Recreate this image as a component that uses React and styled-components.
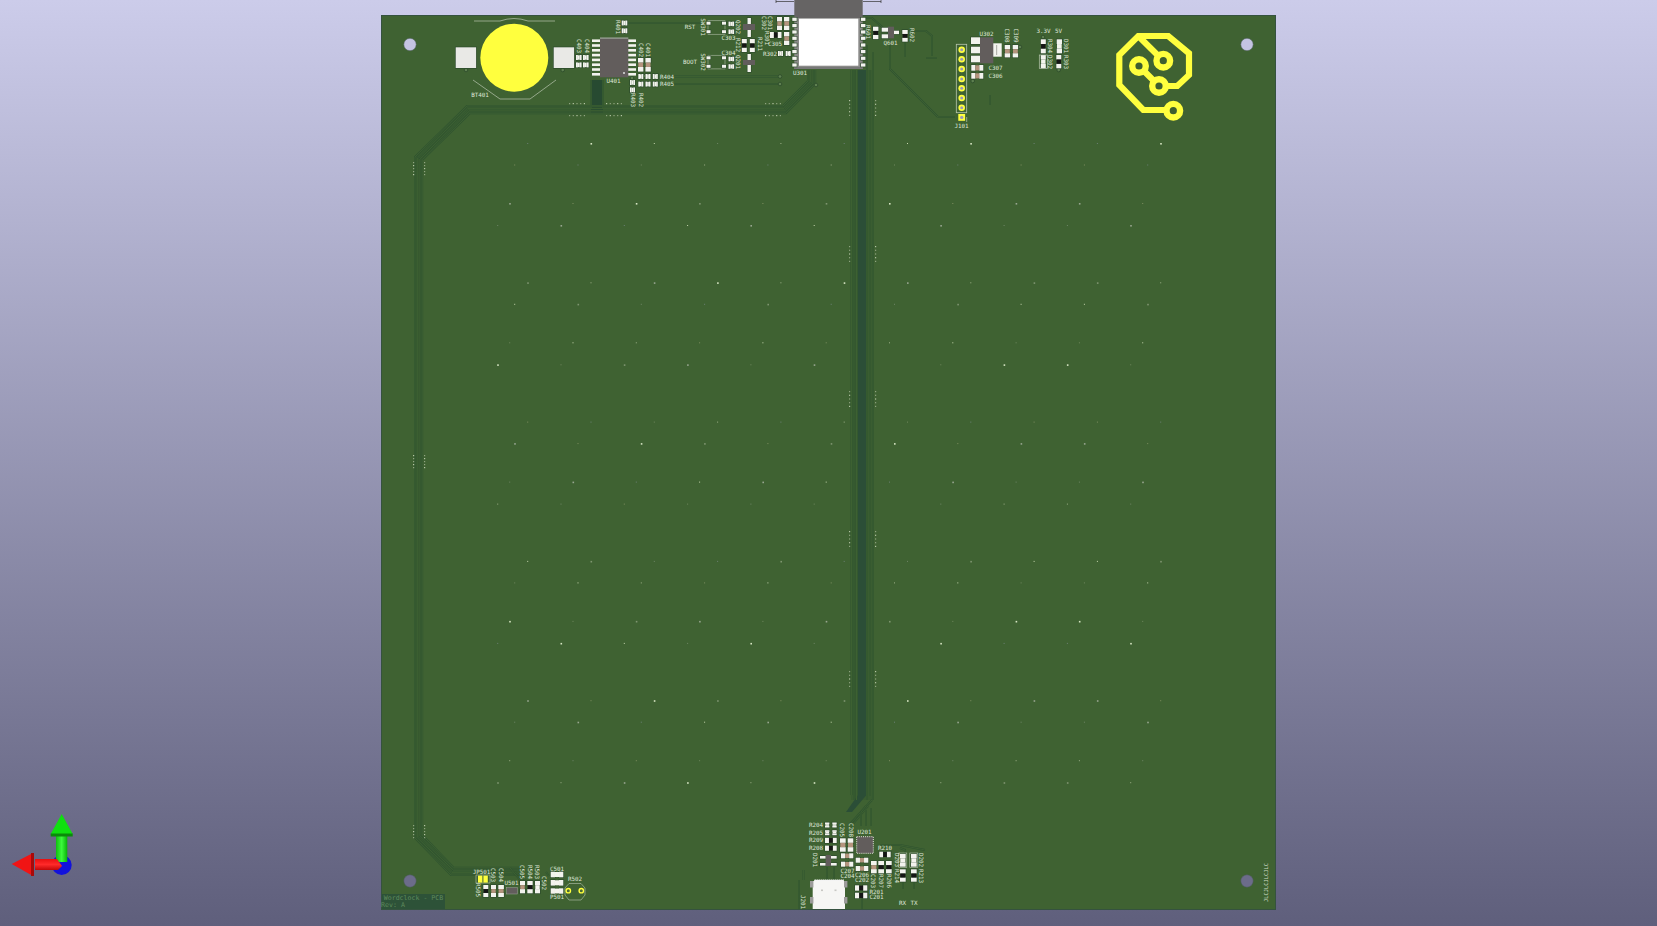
import React from 'react';
import styled, { createGlobalStyle } from 'styled-components';

const Global = createGlobalStyle`
  html, body { margin: 0; height: 100%; overflow: hidden; }
  body { font-family: "DejaVu Sans Mono", monospace; }
`;

const Viewer = styled.div`
  position: relative;
  box-sizing: border-box;
  height: 100vh;
  padding-top: 16px;
  display: flex;
  justify-content: center;
  background: linear-gradient(#ccccea, #5f5f7c);
`;

const Board = styled.div`
  width: 893px;
  height: 893px;
  background: #3f6232;
  box-shadow: 0 0 0 1px #35523f;
`;

const Drawing = styled.svg`
  display: block;
  width: 893px;
  height: 893px;
  overflow: visible;
`;

const Gizmo = styled.svg`
  position: absolute;
  left: 0;
  bottom: 26px;
  width: 100px;
  height: 100px;
`;

const SilkText = styled.text`
  font-family: "DejaVu Sans Mono", "Liberation Mono", monospace;
  font-size: ${p => p.$size || 5.9}px;
  fill: ${p => p.$color || '#dfe6d8'};
  text-anchor: middle;
  dominant-baseline: central;
`;

const Silk = ({ x, y, rot, size, color, children }) => (
  <SilkText x={x} y={y} $size={size} $color={color} transform={rot ? `rotate(${rot} ${x} ${y})` : undefined}>{children}</SilkText>
);

const Pad = styled.rect`
  fill: ${p => p.$fill || '#f3f3ee'};
  stroke: #2c4a2b;
  stroke-width: 1.3;
  paint-order: stroke;
`;

const Chip = styled.rect`
  fill: #625d5c;
`;

const Outline = styled.path`
  fill: none;
  stroke: ${p => p.$color || '#b9c6b0'};
  stroke-width: ${p => p.$w || 0.7};
`;

const BODY = { tan: '#b5947e', black: '#151515', white: '#f4f4ee' };

// two-terminal smd part, box given in page pixels
const Part = ({ x, y, w, h, body = 'white' }) => {
  const vertical = h > w;
  if (vertical) {
    const p = h * 0.34;
    return (
      <g>
        <Pad x={x} y={y} width={w} height={p} />
        <Pad x={x} y={y + h - p} width={w} height={p} />
        <rect x={x + 0.3} y={y + p} width={w - 0.6} height={h - 2 * p} fill={BODY[body]} />
      </g>
    );
  }
  const p = w * 0.34;
  return (
    <g>
      <Pad x={x} y={y} width={p} height={h} />
      <Pad x={x + w - p} y={y} width={p} height={h} />
      <rect x={x + p} y={y + 0.3} width={w - 2 * p} height={h - 0.6} fill={BODY[body]} />
    </g>
  );
};

const parts = [
  [576, 55, 5.6, 5], [583, 55, 5.6, 5], [576, 62.4, 5.6, 5], [583, 62.4, 5.6, 5],
  [621.7, 20.5, 5.6, 5], [621.7, 28.3, 5.6, 5],
  [638, 58, 5.4, 13.6, 'tan'], [645.4, 58, 5.4, 13.6, 'tan'],
  [638.3, 74, 5, 5], [645.5, 74, 5, 5], [652.8, 74, 5, 5],
  [638.3, 81.6, 5, 5], [645.5, 81.6, 5, 5], [652.8, 81.6, 5, 5],
  [630, 80, 5, 5], [630, 87.4, 5, 5],
  [728.5, 21.6, 5.6, 4.6], [728.5, 29.4, 5.6, 4.6], [728.5, 56.7, 5.6, 4.6], [728.5, 64.2, 5.6, 4.6],
  [741.8, 39, 5, 13, 'black'], [749.8, 39, 5, 13, 'black'],
  [777, 17, 5, 13, 'tan'], [784, 17, 5.3, 13, 'tan'],
  [770, 32, 11.5, 6, 'black'], [784, 32, 5.3, 13, 'tan'],
  [778, 51, 5, 5], [785.7, 51, 5, 5],
  [873, 26.7, 5.4, 12.4, 'black'], [902.3, 30, 5.4, 11.7, 'black'],
  [1004.7, 45, 5.4, 12.4, 'tan'], [1012.7, 45, 5.4, 12.4, 'tan'],
  [971.3, 65, 12, 5.7, 'tan'], [971.3, 73, 12, 5.7, 'tan'],
  [1040.8, 39.3, 5, 14, 'black'], [1040.8, 55, 5, 13.3], [1056.7, 39.3, 5.3, 14], [1056.3, 55, 5, 13.3, 'black'],
  [825, 822.5, 4.4, 5], [832.3, 822.5, 4.4, 5], [825, 830.2, 4.4, 5], [832.3, 830.2, 4.4, 5],
  [825, 837.8, 11.7, 5.2, 'black'], [825, 845.6, 11.7, 5.2, 'black'],
  [840, 838.3, 5.7, 13.4, 'tan'], [847.7, 838.3, 5.6, 13.4, 'tan'],
  [841, 853.3, 12.3, 5, 'tan'], [841, 861.7, 12.3, 5, 'tan'],
  [855.7, 857.7, 12.6, 5, 'tan'], [855.7, 866, 12.6, 5, 'tan'],
  [871, 861, 5.7, 12.3, 'tan'], [878.3, 861, 5.7, 12.3, 'black'], [886, 861, 5.7, 12.3, 'black'],
  [879.3, 851.7, 11.4, 5.6, 'black'],
  [855, 885.3, 12.3, 5.4, 'black'], [855, 892.7, 12.3, 5.6, 'black'],
  [900, 854, 5.7, 12.7], [911, 854, 5.7, 12.7], [900, 869.3, 5.7, 12.4, 'black'], [911, 869.3, 5.7, 12.4, 'black'],
  [483.3, 885, 5, 12, 'black'], [491, 885, 5, 12, 'tan'], [498.3, 885, 5.6, 12, 'tan'],
  [520, 881, 5, 12.3, 'tan'], [527.3, 881, 5.4, 12.3, 'black'], [535, 881, 5, 12.3],
  [550.7, 871.7, 12.6, 5.6], [550.7, 880, 12.6, 5.6], [550.7, 888.3, 12.6, 5.4],
];

// label, x, y, rotation
const labels = [
  ['BT401', 480, 95], ['C403', 578.7, 46, 90], ['C404', 586.7, 46, 90], ['R401', 618, 27, 90],
  ['U401', 613.5, 81], ['C402', 640.7, 50, 90], ['C401', 648, 50, 90], ['R404', 667, 76.5], ['R405', 667, 84],
  ['R403', 632.5, 100, 90], ['R402', 640.7, 100, 90], ['RST', 690, 27], ['BOOT', 690, 62],
  ['SW301', 702.7, 27, 90], ['SW302', 702.7, 62, 90], ['C303', 728.5, 37.5], ['C304', 728.5, 53],
  ['Q202', 738, 27, 90], ['R212', 738, 45, 90], ['Q201', 738, 62, 90], ['R211', 760, 44, 90],
  ['C302', 764, 23, 90], ['C301', 770, 23, 90], ['R301', 767, 38, 90], ['C305', 775, 43.5], ['R302', 770, 54],
  ['U301', 800, 72.5], ['R601', 868.3, 32, 90], ['Q601', 890.5, 43], ['R602', 911.7, 35, 90],
  ['J101', 961.5, 126], ['U302', 986.5, 33.5], ['C308', 1007.3, 35.5, 90], ['C309', 1015.7, 35.5, 90],
  ['C307', 995.5, 67.7], ['C306', 995.5, 75.7], ['3.3V', 1043.5, 31], ['5V', 1058.5, 31],
  ['R304', 1050, 46, 90], ['D302', 1050, 62, 90], ['D301', 1065.7, 46, 90], ['R303', 1065.7, 62, 90],
  ['R204', 816, 825], ['R205', 816, 832.7], ['R209', 816, 840.3], ['R208', 816, 848.3],
  ['C205', 842.3, 830, 90], ['C208', 850.7, 830, 90], ['U201', 864.5, 832], ['R210', 885, 847.7],
  ['D201', 815, 860, 90], ['D203', 896.5, 860, 90], ['R214', 896.5, 876, 90], ['D202', 920.7, 860, 90], ['R213', 920.7, 876, 90],
  ['C207', 847.5, 870.7], ['C204', 847.5, 875.5], ['C206', 862, 875.3], ['C202', 862, 880],
  ['C203', 873.3, 881, 90], ['R207', 881, 881, 90], ['R206', 889, 881, 90],
  ['R201', 876.5, 891.7], ['C201', 876.5, 897.3], ['RX', 902.5, 902.7], ['TX', 914, 902.7], ['J201', 803, 902, 90],
  ['JP501', 481.5, 871.7], ['R505', 478.3, 890, 90], ['C503', 493.3, 875, 90], ['C504', 501, 875, 90],
  ['U501', 511.5, 882.7], ['C505', 522.3, 872, 90], ['R504', 530, 872, 90], ['R503', 537.3, 872, 90], ['C502', 544, 883, 90],
  ['C501', 557, 869], ['P501', 557, 897.3], ['R502', 575, 879.3],
];

const holes = [[410, 44.5, '#c4c4e2'], [1247, 44.5, '#c4c4e2'], [410, 881, '#6c6c8a'], [1247, 881, '#6c6c8a']];

const DOT_COLORS = ['#c6d6ae', '#7f9570', '#9db088', '#6f8666', '#98a690', '#7f8f60', '#6c8074', '#d8e6c4', '#70885e'];

const dots = [];
for (let n = 0; n < 5; n++) {
  [[0, 907], [21.5, 894], [60, 889], [82, 877]].forEach(([dy, base], r) => {
    for (let k = -6; k < 5; k++) {
      const x = base + k * 63.3;
      if (x > 845 && x < 880) continue;
      const seed = Math.abs(n * 31 + r * 17 + k * k * 5 + k * 11) % 9;
      dots.push({ x, y: 143 + n * 139.3 + dy, fill: DOT_COLORS[seed], size: seed % 3 === 1 ? 1.6 : 1 });
    }
  });
}

const cluster = (x, y0, step = 3.7) => [0, 1, 2, 3, 4].map(i => ({ x, y: y0 + i * step }));
const rowCluster = (x0, y) => [0, 1, 2, 3, 4].map(i => ({ x: x0 + i * 3.7, y }));
const viaMarks = [
  ...[100, 246, 391, 531, 671].flatMap(y => [...cluster(849, y), ...cluster(875, y)]),
  ...[162, 455, 825].flatMap(y => [...cluster(413, y, 3), ...cluster(424, y, 3)]),
  ...[569, 606, 765].flatMap(x => [...rowCluster(x, 103), ...rowCluster(x, 115)]),
];

const loopTrack = i => {
  const t = 0.414 * i;
  return `M520 ${875 - i} L${451 + t} ${875 - i} L${415 + i} ${838 - t} L${415 + i} ${157 + t} L${467 + t} ${106 + i} L${783 + t} ${106 + i} L${808 + i} ${81 + t} L${808 + i} 70`;
};

const Track = styled.path`
  fill: none;
  stroke: ${p => p.$color || '#2f5330'};
  stroke-width: ${p => p.$w || 1.9};
`;

const Trace = ({ d }) => (
  <g>
    <Track d={d} />
    <Track d={d} $color="#3f6332" $w={0.9} />
  </g>
);

const traces = [
  'M628 23 L705 23', 'M660 76.5 L780 76.5', 'M660 84 L780 84',
  'M603 80 L603 108', 'M591 80 L591 108',
  'M938 117 L955 117 M938 117 L890 69 L890 40', 'M852 18 L872 18 L890 34',
  'M907 31 L926 31 L932 36 L932 56', 'M905 40 L905 57',
  'M851.5 70 L851.5 795', 'M854 70 L854 800', 'M856.5 70 L856.5 800',
  'M867 45 L867 800', 'M870 70 L870 796', 'M873 52 L873 800',
  'M872 800 L850 824', 'M868 806 L853 824', 'M861 826 L861 812 L866 806', 'M866 826 L866 810', 'M871 826 L871 808',
  'M873 851 L873 846', 'M900 848 L905 850 L905 854', 'M880 845 L900 845 L925 850',
  'M799 880 L799 909', 'M803.5 870 L803.5 880', 'M862 898 L862 909',
  'M903 882 L903 889', 'M914 882 L914 889',
  'M990 95 L990 105', 'M926 58 L937 58', 'M827 867 L827 880', 'M834 867 L834 880',
  'M515 872 L528 882', 'M510 868 L520 880', 'M546 872 L549 876',
];

const u401Pins = [0, 1, 2, 3, 4, 5, 6, 7].map(i => 40.7 + i * 4.8);
const moduleVias = [[466, 70], [562.7, 70], [644, 76], [632, 78], [780, 76.5], [780, 84], [816, 85], [1020, 47], [972.7, 81], [1058.7, 70], [1043, 37]];
const headerPins = [49.7, 59.3, 69, 79, 88.3, 98, 107.7];
const u301Pads = [19.3, 25.6, 32, 38.3, 45, 51.6, 58.3, 65];
const Y = '#ffff3e';

const switches = [20.7, 55.3];
const logoRings = [[1139, 66], [1163.3, 60.7], [1159, 86], [1173.3, 110.7]];

const Drawings = () => (
  <Drawing viewBox="382 16 893 893">
    {/* copper under the mask */}
    <rect x="851" y="70" width="22" height="730" fill="#3a5d31" />
    <rect x="858" y="70" width="8.5" height="725" fill="#2b4e37" />
    <polygon points="858,795 866.5,795 852,812 846,812" fill="#2b4e37" />
    <rect x="591" y="80" width="12" height="33" fill="#274a31" />
    {[0, 2.4, 4.8, 7.2].map(i => <Trace key={i} d={loopTrack(i)} />)}
    {traces.map(d => <Trace key={d} d={d} />)}

    {dots.map((d, i) => <rect key={i} x={d.x} y={d.y} width={d.size} height={d.size} fill={d.fill} />)}
    {viaMarks.map((d, i) => <rect key={i} x={d.x} y={d.y} width="1.2" height="1.2" fill={i % 3 ? '#8fa480' : '#b6c6a6'} />)}
    {moduleVias.map(([x, y]) => <circle key={`${x}-${y}`} cx={x} cy={y} r="1.8" fill="#5e8050" stroke="#2c4a2b" strokeWidth="0.8" />)}

    {holes.map(([x, y, c]) => <circle key={`${x}${y}`} cx={x} cy={y} r="6.2" fill={c} stroke="#4a5a58" strokeWidth="0.5" />)}

    {/* coin cell */}
    <Outline d="M474 21 L500 21 Q514 16 528 21 L555 21 M473 80 L500 99 L530 99 L556 80" />
    <Pad x="455.7" y="47.3" width="20.4" height="20.7" $fill="#e9e9e6" />
    <Pad x="553.7" y="47.3" width="20.4" height="20.7" $fill="#e9e9e6" />
    <circle cx="514.3" cy="57.7" r="34" fill={Y} />

    {/* U401 */}
    {u401Pins.map(y => (
      <rect key={y} x="592" y={y - 1.3} width="44" height="2.6" fill="#f3f3ee" />
    ))}
    <Chip x="600" y="38.3" width="28.3" height="39" />
    <rect x="600" y="37.5" width="28.3" height="1.2" fill="#a3a6a0" />
    <circle cx="624" cy="73" r="1" fill="#ddd" />

    {/* switches */}
    {switches.map(y => (
      <g key={y}>
        <rect x="708" y={y} width="17" height="13.6" fill="none" stroke="#9fb096" strokeWidth="0.7" />
        <Pad x="706.5" y={y + 1} width="4" height="3" />
        <Pad x="706.5" y={y + 9.5} width="4" height="3" />
        <Pad x="722" y={y + 1} width="4" height="3" />
        <Pad x="722" y={y + 9.5} width="4" height="3" />
      </g>
    ))}

    {/* Q201 / Q202 */}
    <Pad x="747.5" y="18" width="3.4" height="6" />
    <Pad x="747.5" y="30" width="3.4" height="7" />
    <Chip x="743" y="24" width="12" height="6" />
    <Pad x="747.5" y="54" width="3.4" height="6" />
    <Pad x="747.5" y="65" width="3.4" height="7" />
    <Chip x="743" y="60" width="12" height="5" />

    {/* U301 module */}
    <rect x="794.3" y="-16" width="68.4" height="34" fill="#666464" />
    <rect x="794.3" y="18" width="68.4" height="51" fill="#8a8a88" />
    <rect x="799" y="18.7" width="59.3" height="47" fill="#ffffff" />
    <rect x="794.3" y="67" width="68.4" height="2" fill="#777" />
    {u301Pads.map(y => (
      <g key={y}>
        <Pad x="792.3" y={y - 1.6} width="4.4" height="3.2" />
        <Pad x="861" y={y - 1.6} width="4.4" height="3.2" />
      </g>
    ))}
    <Outline d="M776 1.5 L794 1.5 M776 0 L776 3 M863 1.5 L881 1.5 M881 0 L881 3" $color="#333" />

    {/* Q601 */}
    <Pad x="881.7" y="27.7" width="6.5" height="4" />
    <Pad x="881.7" y="34.3" width="6.5" height="4" />
    <Pad x="894" y="30.7" width="5" height="3.4" />
    <Chip x="888" y="26.7" width="6" height="11.6" />

    {/* J101 */}
    <rect x="956.3" y="44.3" width="10.4" height="68.4" fill="none" stroke="#b9c6b0" strokeWidth="0.8" />
    {headerPins.map(y => (
      <g key={y}>
        <circle cx="961.7" cy={y} r="3.3" fill={Y} />
        <circle cx="961.7" cy={y} r="1.5" fill="#9a9ab8" />
      </g>
    ))}
    <rect x="958.3" y="114" width="6.8" height="6.8" fill={Y} />
    <circle cx="961.7" cy="117.4" r="1.7" fill="#9a9ab8" />
    <Outline d="M966.7 117 L966.7 122" />

    {/* U302 */}
    <Pad x="971" y="37.3" width="9" height="6.7" />
    <Pad x="971" y="46.7" width="9" height="6.6" />
    <Pad x="971" y="55.7" width="9" height="6.6" />
    <rect x="993" y="43.3" width="8.7" height="13.4" fill="#f3f3ee" />
    <rect x="996" y="45" width="1.2" height="10" fill="#b4b4ae" />
    <Chip x="980" y="37.3" width="13.3" height="26" />

    {parts.map(([x, y, w, h, body]) => <Part key={`${x}-${y}`} x={x} y={y} w={w} h={h} body={body} />)}

    <rect x="1039.3" y="55" width="8" height="13.3" fill="none" stroke="#b9c6b0" strokeWidth="0.7" />
    <rect x="898.8" y="853" width="8" height="14.5" fill="none" stroke="#b9c6b0" strokeWidth="0.6" />
    <rect x="909.8" y="853" width="8" height="14.5" fill="none" stroke="#b9c6b0" strokeWidth="0.6" />

    {/* logo */}
    <Outline
      d="M1159 86 L1177.3 86 L1189 75 L1189 53.3 L1168.3 36 L1138.3 36 L1119.3 55 L1119.3 85 L1143.3 110 L1173.3 110 M1138.3 36 L1163.3 60.7 M1139 66 L1159 86"
      $color={Y}
      $w={6.2}
    />
    {logoRings.map(([x, y]) => <circle key={x} cx={x} cy={y} r="6.8" fill="#3d5e30" stroke={Y} strokeWidth="6.4" />)}

    {/* U201 */}
    <Chip x="856.7" y="836.7" width="16.6" height="16.6" stroke="#e8e8e0" strokeWidth="1" strokeDasharray="1 1.1" />
    <Pad x="820" y="856" width="5.7" height="2.6" />
    <Pad x="820" y="863" width="5.7" height="2.6" />
    <Pad x="831" y="856" width="5.7" height="2.6" />
    <Pad x="831" y="863" width="5.7" height="2.6" />
    <Chip x="825.7" y="855" width="5.3" height="11" />

    {/* USB-C bottom */}
    <rect x="814" y="879.5" width="30" height="2" fill="#f4f4f4" stroke="#3f6232" strokeWidth="0.5" strokeDasharray="1 1" />
    <rect x="812.7" y="881" width="32.3" height="28" fill="#f6f6f4" />
    <rect x="810" y="881" width="3.4" height="6.5" fill="#9c9c9a" />
    <rect x="810" y="897" width="3.4" height="6.5" fill="#9c9c9a" />
    <rect x="844" y="881" width="3.4" height="6.5" fill="#9c9c9a" />
    <rect x="844" y="897" width="3.4" height="6.5" fill="#9c9c9a" />
    <rect x="821" y="889.5" width="2" height="1.6" fill="#c8c8c4" />
    <rect x="834.5" y="889.5" width="2" height="1.6" fill="#c8c8c4" />

    {/* bottom-left parts */}
    <Outline d="M476 875 L490 875 L490 883 L476 883 Z" $w={0.6} />
    <rect x="478" y="875.6" width="4.4" height="7" fill={Y} />
    <rect x="483.4" y="875.6" width="4.4" height="7" fill={Y} />
    <rect x="506.7" y="887.7" width="10.6" height="6.3" fill="#625d5c" stroke="#a0a49c" strokeWidth="0.5" />
    <Outline d="M569 883.5 L581 883.5 L585 888 L585 895 L581 900 L569 900 L565 895 L565 888 Z" $w={0.6} />
    {[568.3, 581.3].map(x => <circle key={x} cx={x} cy="890.7" r="2.2" fill="#4a6a34" stroke={Y} strokeWidth="1.4" />)}

    {labels.map(([t, x, y, rot]) => <Silk key={t} x={x} y={y} rot={rot}>{t}</Silk>)}

    <rect x="382" y="894" width="63" height="15" fill="#2d5238" />
    <SilkText x="413.5" y="897.8" $size={6.6} $color="#5f8a5c">Wordclock - PCB</SilkText>
    <SilkText x="393" y="905" $size={6.6} $color="#5f8a5c">Rev: A</SilkText>
    <Silk x={1266} y={882.5} rot={-90} size={5.4} color="#cfdcc4">JLCJLCJLCJLC</Silk>
  </Drawing>
);

const AxisGizmo = () => (
  <Gizmo viewBox="0 800 100 100">
    <defs>
      <linearGradient id="greenShaft" x1="0" x2="1" y1="0" y2="0">
        <stop offset="0" stopColor="#10c010" />
        <stop offset="0.5" stopColor="#3cfa3c" />
        <stop offset="1" stopColor="#08b008" />
      </linearGradient>
      <linearGradient id="redShaft" x1="0" x2="0" y1="0" y2="1">
        <stop offset="0" stopColor="#e81010" />
        <stop offset="0.5" stopColor="#ff2a2a" />
        <stop offset="1" stopColor="#c00808" />
      </linearGradient>
    </defs>
    <circle cx="61.7" cy="865" r="10" fill="#1212dc" />
    <rect x="56" y="836" width="11.3" height="26" fill="url(#greenShaft)" />
    <polygon points="61.7,814 72.7,834 50.7,834" fill="#10e010" />
    <rect x="50.7" y="833.5" width="22" height="3" fill="#0a8a0a" />
    <polygon points="35,859 57,859 62,866 58,870 35,870" fill="url(#redShaft)" />
    <polygon points="11.7,864 33,853 33,876" fill="#f01414" />
    <rect x="31" y="853" width="3" height="23" fill="#a80a0a" />
  </Gizmo>
);

export default function App() {
  return (
    <Viewer>
      <Global />
      <Board>
        <Drawings />
      </Board>
      <AxisGizmo />
    </Viewer>
  );
}
